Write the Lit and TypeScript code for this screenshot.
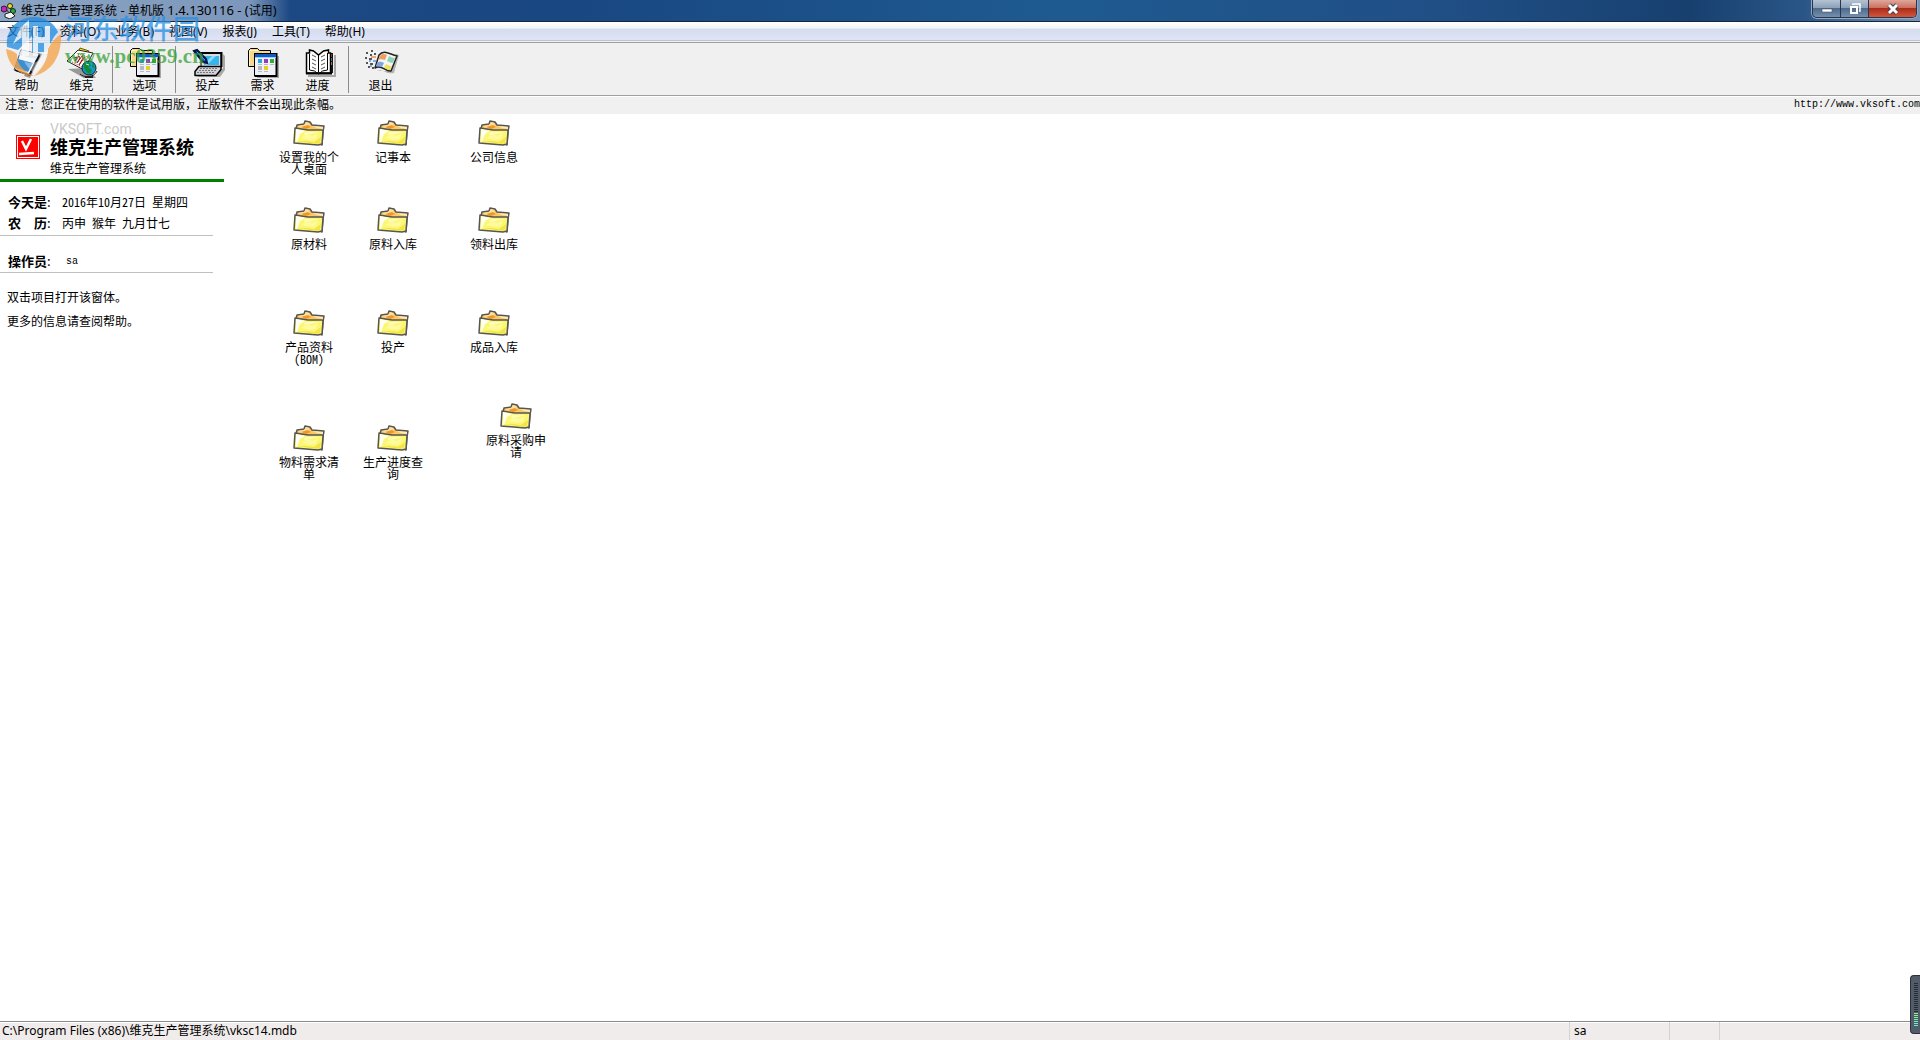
import { LitElement, html, svg, css, TemplateResult } from "lit";
import { customElement } from "lit/decorators.js";

interface DesktopItem {
  label: string;
  x: number;
  y: number;
}

const MENUS = ["文件(F)", "资料(O)", "业务(B)", "视图(V)", "报表(J)", "工具(T)", "帮助(H)"];

const ITEMS: DesktopItem[] = [
  { label: "设置我的个人桌面", x: 55, y: 6 },
  { label: "记事本", x: 139, y: 6 },
  { label: "公司信息", x: 240, y: 6 },
  { label: "原材料", x: 55, y: 93 },
  { label: "原料入库", x: 139, y: 93 },
  { label: "领料出库", x: 240, y: 93 },
  { label: "产品资料(BOM)", x: 55, y: 196 },
  { label: "投产", x: 139, y: 196 },
  { label: "成品入库", x: 240, y: 196 },
  { label: "物料需求清单", x: 55, y: 311 },
  { label: "生产进度查询", x: 139, y: 311 },
  { label: "原料采购申请", x: 262, y: 289 },
];

const formsWindow = svg`
  <path d="M10 29h20v-20h2v22h-22z" fill="#a8a8a8"/>
  <path d="M1.500 19.500V3.500l2-2h7l2 2h11v16z" fill="#f6d88a" stroke="#000"/>
  <path d="M3 3.500h8M2.500 4v15" stroke="#fff4cc" fill="none"/>
  <rect x="7.500" y="6.500" width="22" height="22" fill="#f0f1f7" stroke="#000"/>
  <path d="M29.500 6v23h-22" fill="none" stroke="#000" stroke-width="2"/>
  <rect x="8" y="7" width="21" height="3" fill="#1558c8"/>
  <path d="M8 10.500h21" stroke="#9cccf8"/>
  <rect x="11" y="12" width="4" height="4" fill="#20a8e8"/><rect x="17" y="12" width="4" height="4" fill="#9838c8"/>
  <rect x="23" y="12" width="4" height="4" fill="#30b030"/><rect x="11" y="19" width="4" height="4" fill="#b8b8c0"/>
  <rect x="17" y="19" width="4" height="4" fill="#e8d020"/>
  <path d="M11 17.500h4m2 0h4m2 0h4M11 24.500h4m2 0h4" stroke="#b4b8cc"/>`;

const ICONS: Record<string, TemplateResult> = {
  help: svg`
    <path d="M13 29l6 2 12-24-3-1z" fill="#999"/>
    <path d="M10 3l18 4-10 21-15-5z" fill="#f7f8fa" stroke="#35527a" stroke-width="1"/>
    <path d="M7 12l15 4-5 9-13-4z" fill="#3c8ed2"/>
    <path d="M10 3l18 4-2 5-18-4z" fill="#dfe6ee"/>
    <path d="M4 22l14 5 10-20 1 2-10 20-15-5z" fill="#10141c"/>
    <path d="M5 22l13 4" stroke="#fff"/>`,
  vk: svg`
    <path d="M2 22l16 9h12l-8-10z" fill="#999"/>
    <path d="M14 1l9 3-2 5-9-3z" fill="#f8d820" stroke="#665a10"/>
    <path d="M12 3l15 3-9 17L1 14z" fill="#fff" stroke="#222"/>
    <path d="M8 11l3-1-2 4 4-5 1 2-3 5 5-7 1 2-4 7 6-8" fill="none" stroke="#a81818" stroke-width="1"/>
    <path d="M12 7l10 3M6 15l10 5" stroke="#c03030" stroke-dasharray="1 1"/>
    <circle cx="23" cy="21" r="7" fill="#149bc4" stroke="#123"/>
    <path d="M18 17l5-2 2 4-3 1 4 3-2 4-4-2-2-4zM27 16l2 5-3-1z" fill="#128a3c"/>
    <path d="M20 17l3 1" stroke="#c8ff90"/>
    <path d="M14 27c4 4 14 4 17-3" fill="none" stroke="#222"/>
    <path d="M19 30h8" stroke="#222" stroke-width="2"/>`,
  options: formsWindow,
  demand: formsWindow,
  produce: svg`
    <path d="M6 30h22l5-7V9l-2-2v14l-7 7H4z" fill="#a8a8a8"/>
    <rect x="9" y="6" width="20" height="14" fill="#d8dadd" stroke="#000"/>
    <path d="M9 6h20.500v14" fill="none" stroke="#000" stroke-width="2"/>
    <rect x="12" y="9" width="15" height="9" fill="#35b5ed"/>
    <path d="M12 17l8-8h4l-9 9z" fill="#8edaf8"/>
    <path d="M7 19.500h22v3l-5 6H3v-4z" fill="#d2d3d6" stroke="#000" stroke-width="1.500" stroke-linejoin="round"/>
    <path d="M8 21.500h18M7 23.500h18M5 25.500h18" stroke="#777a80" stroke-dasharray="2 1"/>
    <path d="M2 4l3-1 9 9 1 4-4-1z" fill="#1761cd" stroke="#00133e" stroke-width="2"/>
    <path d="M5 5l8 8" stroke="#4d9af0"/>`,
  progress: svg`
    <path d="M6 28h26V8h2v22H6z" fill="#a8a8a8"/>
    <path d="M27 6h4v20h-4z" fill="#161616"/>
    <rect x="28" y="7" width="2" height="3" fill="#e82818"/><rect x="28" y="11" width="2" height="3" fill="#20b0e8"/>
    <rect x="28" y="15" width="2" height="3" fill="#f0a020"/>
    <path d="M4.500 6h3V3l4 1 5 4 5-4 5-1v3h2v20H4.500z" fill="#fff" stroke="#000" stroke-width="1.500"/>
    <path d="M4 26.500h26" stroke="#000" stroke-width="2"/>
    <path d="M16.500 8v17M7.500 7v16l5 1 4 3 4-3 5-1V6" stroke="#000" fill="none"/>
    <path d="M10 8l4 2M10 12l4 2M10 16l4 2M10 20l4 2M19 10l4-2M19 14l4-2M19 18l4-2M19 22l4-2" stroke="#555"/>`,
  exit: svg`
    <path d="M12 24c6-3 9 4 17 2l5-18-3-1-6 17z" fill="#b4b4b4"/>
    <path d="M14 8c5-6 10-1 18 1l-6 15c-6 1-9-7-16-3z" fill="#f6f6f6" stroke="#222" stroke-width="1.500" stroke-linejoin="round"/>
    <path d="M15 9c2-3 5-2 7-1l-2 5c-3-1-5-1-7 0z" fill="#eda066"/>
    <path d="M24 9c2 1 4 2 6 2l-2 5c-2 0-4-1-6-2z" fill="#8fd4b8"/>
    <path d="M12 16c2-2 5-1 7 0l-2 4c-2-1-4-1-6-1z" fill="#7aa8e0"/>
    <path d="M21 17c2 1 4 2 6 2l-2 4c-3 0-5-2-6-3z" fill="#f2e060"/>
    <path d="M1 6h2m2 2h2M0 11h2m2 1h3M1 16h2m2 1h3M3 20h2m2 1h2M6 4h2m1 3h2" stroke="#222" stroke-width="1.500"/>
    <path d="M6 10h5" stroke="#e8a878" stroke-width="2"/>
    <path d="M4 14h2m2 0h3M5 19h2" stroke="#88aede" stroke-width="2"/>`,
};

const TOOLS = [
  [["help", "帮助"], ["vk", "维克"]],
  [["options", "选项"]],
  [["produce", "投产"], ["demand", "需求"], ["progress", "进度"]],
  [["exit", "退出"]],
];

const folder = html`<svg class="folder" viewBox="0 0 32 26" width="32" height="26" aria-hidden="true">
  <path d="M3 9l1-4 7-1 1-3 5 1 2 3 12 1-1 6-1 13z" fill="#fcc860" stroke="#555" stroke-width="1.500" stroke-linejoin="round"/>
  <path d="M5 6l6-1 2-3 3 1 1 4-8 1z" fill="#fde0a0"/>
  <path d="M8 7l7-2 3 2-5 2z" fill="#f2962c"/>
  <path d="M20 6l10 1v2l-6-1z" fill="#fdeac0"/>
  <path d="M2 8l13 2h14l1 1-1 13-4 1L1 23z" fill="#fcf772" stroke="#555" stroke-width="1.500" stroke-linejoin="round"/>
  <path d="M3 9l9 2-5 3-3 8-1 0z" fill="#fffff4"/>
  <path d="M12 12l14 0-8 2-7 1z" fill="#fffbc0"/>
  <path d="M8 18l7-4 4 2 6-3-2 6-6 1z" fill="#fffa9c"/>
  <path d="M4 21l9 0 8 1 7-5-1 6-3 1z" fill="#f3e548"/>
</svg>`;

@customElement("app-root")
export class AppRoot extends LitElement {
  static styles = css`
    :host {
      display: flex;
      flex-direction: column;
      position: relative;
      min-height: 100vh;
      overflow: hidden;
      background: #fff;
      color: #000;
      font: 12px/12px "Noto Sans CJK SC", sans-serif;
      text-spacing-trim: space-all;
    }
    * { box-sizing: border-box; }
    button {
      border: 0;
      margin: 0;
      padding: 0;
      background: none;
      color: inherit;
      font: inherit;
    }
    .titlebar {
      display: flex;
      height: 22px;
      align-items: center;
      justify-content: space-between;
      padding-left: 1px;
      border-bottom: 1px solid #17253c;
      background: linear-gradient(90deg, #8ca5c4 0, #7c97bb 250px, #1c4883 290px, #194782 30%, #1e5a90 55%, #204f86 75%, #17406f 88%, #2a5687 94%, #7893b4 100%);
    }
    .caption {
      display: flex;
      gap: 4px;
      align-items: center;
    }
    .title, .menubar, .status {
      margin: 0;
      font: 12px/16px "Noto Sans", "Noto Sans CJK SC", sans-serif;
    }
    .version { font-size: 13px; }
    .winbtns {
      display: flex;
      align-self: flex-start;
      height: 18px;
      margin-right: 3px;
      border: 1px solid #26364e;
      border-top: 0;
      border-radius: 0 0 5px 5px;
      overflow: hidden;
      box-shadow: 0 0 0 1px #93a9c2;
    }
    .winbtn {
      width: 28px;
      display: grid;
      place-items: center;
      border-right: 1px solid #26364e;
      background: linear-gradient(#b4c3d3 0, #8ca1b9 45%, #4f6a8b 50%, #7690ae 100%);
    }
    .winbtn.close {
      width: 47px;
      border-right: 0;
      background: linear-gradient(#dfa79a 0, #cb7262 45%, #ae2c1a 50%, #d0573b 100%);
    }
    .menubar {
      display: flex;
      height: 21px;
      gap: 15px;
      padding: 0 7px;
      border-bottom: 1px solid #a0a0a0;
      background: linear-gradient(#fff 0, #f3f5fa 30%, #d5dcee 36%, #dfe5f7 90%, #b8bfd2 92%, #f0f0f0 97%);
    }
    .toolbar {
      display: flex;
      height: 53px;
      margin-left: -1px;
      border-bottom: 1px solid #a0a0a0;
      background: #f0f0f0;
    }
    .group { display: flex; }
    .group + .group::before {
      content: "";
      width: 1px;
      margin: 3px 4px 2px 3px;
      background: #8c8c8c;
    }
    .tool {
      display: flex;
      flex-direction: column;
      align-items: center;
      width: 55px;
      padding-top: 4px;
    }
    .toolicon { display: block; overflow: visible; }
    .notice {
      display: flex;
      justify-content: space-between;
      height: 18px;
      padding: 1px 0 0 5px;
      border-top: 1px solid #fff;
      background: #f0f0f0;
    }
    .notice p { margin: 0; }
    .site {
      color: #000;
      text-decoration: none;
      font: 10px/14px "Liberation Mono", monospace;
    }
    .workspace { display: flex; flex: 1; }
    .side { width: 224px; }
    .brand {
      display: grid;
      grid-template-columns: 24px 1fr;
      column-gap: 10px;
      height: 68px;
      padding: 8px 0 0 16px;
      border-bottom: 3px solid #008000;
    }
    .brandlogo { margin-top: 13px; }
    .domain {
      margin: 0;
      color: #c9c9c9;
      font: 14px/14px Roboto, sans-serif;
    }
    .product {
      margin: 0;
      font-size: 18px;
      line-height: 20px;
      font-weight: 700;
    }
    .edition { margin: 0; padding-top: 6px; }
    .info {
      width: 213px;
      margin: 0;
      padding-left: 8px;
      border-bottom: 1px solid #c0c0c0;
    }
    .info.dates { padding-top: 14px; height: 54px; }
    .info.user { padding-top: 19px; height: 37px; }
    .row { display: flex; height: 21px; }
    .row dt { width: 54px; font-size: 13px; }
    .row dt b { font-weight: 700; }
    .row dd { margin: 0; white-space: pre; font-feature-settings: "hwid"; }
    .row dd.latin { font: 10px/14px "Liberation Mono", monospace; padding-left: 4px; }
    .hints { padding: 18px 7px; display: grid; gap: 12px; }
    .hints p { margin: 0; }
    .desk { position: relative; flex: 1; }
    .item {
      position: absolute;
      display: flex;
      flex-direction: column;
      align-items: center;
      width: 60px;
      gap: 5px;
      line-height: 12px;
      font-feature-settings: "hwid";
    }
    .status {
      display: flex;
      height: 19px;
      border-top: 1px solid #8c8c8c;
      background: #f0eceb;
      box-shadow: inset 0 1px #fff;
      line-height: 18px;
    }
    .cell { padding-left: 4px; border-left: 1px solid #d4d2d2; }
    .cell.path { flex: 1; padding-left: 2px; border-left: 0; }
    .cell.w100 { width: 100px; }
    .cell.w50 { width: 50px; }
    .cell.rest { width: 201px; }
    .meter {
      position: absolute;
      right: 0;
      bottom: 6px;
      width: 10px;
      height: 59px;
      padding: 7px 2px 6px 3px;
      border: 1px solid #2b303b;
      border-right: 0;
      border-radius: 4px 0 0 4px;
      background: #525b6a;
    }
    .bars {
      height: 100%;
      background: repeating-linear-gradient(transparent 0 1px, #525b6a 1px 2px), linear-gradient(#262b35 0 65%, #a0f070 66%, #50f0e0 100%);
    }
    .mark {
      position: absolute;
      left: 6px;
      top: 12px;
      display: flex;
      gap: 3px;
      opacity: .75;
      pointer-events: none;
    }
    .marktext p { margin: 0; white-space: nowrap; }
    .markname { color: #2590e2; font-size: 27px; line-height: 32px; font-weight: 500; }
    .markurl {
      color: #38a038;
      font: bold 21px/24px "Liberation Serif", serif;
    }
  `;

  render() {
    return html`
      <header class="titlebar">
        <div class="caption">
          <svg width="16" height="16" viewBox="0 0 16 16" aria-hidden="true">
            <path d="M5 6l4 5M10 4v6" stroke="#222"/>
            <circle cx="3" cy="6" r="3" fill="#d020c0" stroke="#222"/>
            <circle cx="9" cy="3" r="2.500" fill="#f0e020" stroke="#222"/>
            <circle cx="12" cy="8" r="2.500" fill="#20b030" stroke="#222"/>
            <path d="M4 11l6-2 4 4-5 3-5-2z" fill="#f4f4f4" stroke="#222"/>
          </svg>
          <h1 class="title">维克生产管理系统<span class="version"> - </span>单机版<span class="version"> 1.4.130116 - (</span>试用<span class="version">)</span></h1>
        </div>
        <div class="winbtns">
          <button class="winbtn" aria-label="最小化"><svg width="12" height="12"><rect x="1" y="6" width="10" height="3" fill="#fff" stroke="#4a5568" stroke-width=".6"/></svg></button>
          <button class="winbtn" aria-label="还原"><svg width="12" height="12"><path d="M4 2V1h7v7h-1" fill="none" stroke="#fff" stroke-width="1.500"/><rect x="2" y="4" width="6" height="6" fill="none" stroke="#fff" stroke-width="2"/></svg></button>
          <button class="winbtn close" aria-label="关闭"><svg width="14" height="12"><path d="M3 2l8 8M11 2l-8 8" stroke="#4a3c4c" stroke-width="5"/><path d="M3 2l8 8M11 2l-8 8" stroke="#fff" stroke-width="3"/></svg></button>
        </div>
      </header>
      <nav class="menubar">${MENUS.map((m) => html`<button class="menu">${m}</button>`)}</nav>
      <div class="toolbar" role="toolbar">
        ${TOOLS.map((g) => html`<div class="group">${g.map(([id, label]) => html`
          <button class="tool">
            <svg class="toolicon" width="32" height="32" viewBox="0 0 32 32" aria-hidden="true">${ICONS[id]}</svg>
            <span>${label}</span>
          </button>`)}</div>`)}
      </div>
      <div class="notice">
        <p>注意：您正在使用的软件是试用版，正版软件不会出现此条幅。</p>
        <a class="site" href="http://www.vksoft.com">http://www.vksoft.com</a>
      </div>
      <main class="workspace">
        <aside class="side">
          <div class="brand">
            <svg class="brandlogo" width="24" height="24" viewBox="0 0 24 24" aria-hidden="true">
              <rect width="24" height="24" fill="#f00"/>
              <rect x="1.500" y="1.500" width="21" height="21" fill="none" stroke="#fff"/>
              <path d="M6 6l4 8 5-10M3 19l15-1" fill="none" stroke="#fff" stroke-width="2.500"/>
            </svg>
            <div>
              <p class="domain">VKSOFT.com</p>
              <h2 class="product">维克生产管理系统</h2>
              <p class="edition">维克生产管理系统</p>
            </div>
          </div>
          <dl class="info dates">
            <div class="row"><dt><b>今天是</b>:</dt><dd>2016年10月27日 星期四</dd></div>
            <div class="row"><dt><b>农　历</b>:</dt><dd>丙申 猴年 九月廿七</dd></div>
          </dl>
          <dl class="info user">
            <div class="row"><dt><b>操作员</b>:</dt><dd class="latin">sa</dd></div>
          </dl>
          <div class="hints">
            <p>双击项目打开该窗体。</p>
            <p>更多的信息请查阅帮助。</p>
          </div>
        </aside>
        <section class="desk">
          ${ITEMS.map((i) => html`<button class="item" style="left:${i.x}px;top:${i.y}px">${folder}<span>${i.label}</span></button>`)}
        </section>
      </main>
      <footer class="status">
        <span class="cell path">C:\\Program Files (x86)\\维克生产管理系统\\vksc14.mdb</span>
        <span class="cell w100">sa</span>
        <span class="cell w50"></span>
        <span class="cell rest"></span>
      </footer>
      <div class="meter"><div class="bars"></div></div>
      <div class="mark">
        <svg width="56" height="68" viewBox="0 0 56 68" aria-hidden="true">
          <path d="M1 35C-1 18 12 5 28 5c11 0 20 6 24 15-5 5-8 12-12 20H26V24L12 38z" fill="#1e8ade"/>
          <path d="M15 15l8-7v36h-7V25l-9 7zM27 14h5v11h7V14h5v28h-6V31h-6v13h-5z" fill="#fff" opacity=".85"/>
          <path d="M0 37c2 17 14 27 28 27-12-5-18-14-17-22-4-3-7-4-11-5z" fill="#f5a044"/>
          <path d="M55 22c1 23-10 38-27 42 9-8 14-17 14-27 3-6 8-12 13-15z" fill="#f5a044"/>
          <path d="M18 49c7 4 15 2 22-7-1 8-6 15-12 19-4-3-8-7-10-12z" fill="#fff" opacity=".5"/>
        </svg>
        <div class="marktext">
          <p class="markname">河东软件园</p>
          <p class="markurl">www.pc0359.cn</p>
        </div>
      </div>
    `;
  }
}
